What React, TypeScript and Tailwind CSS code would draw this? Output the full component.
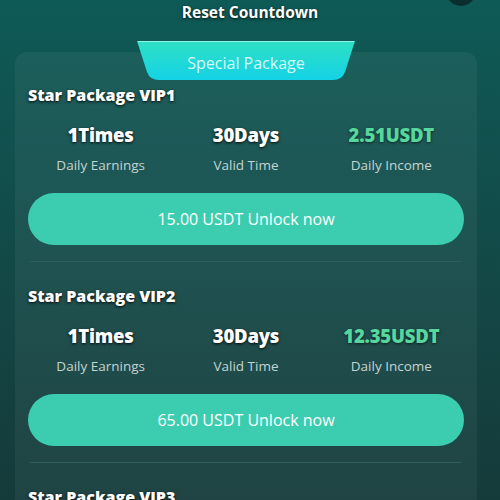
import React from "react";

const packages = [
  { name: "Star Package VIP1", times: "1Times", days: "30Days", income: "2.51USDT", price: "15.00" },
  { name: "Star Package VIP2", times: "1Times", days: "30Days", income: "12.35USDT", price: "65.00" },
  { name: "Star Package VIP3", times: "1Times", days: "30Days", income: "25.00USDT", price: "128.00" },
];

function Tab() {
  return (
    <div className="absolute left-[122px] -top-[11px] w-[218px] h-[39px]">
      <svg width="218" height="39" viewBox="0 0 218 39" className="absolute inset-0">
        <defs>
          <linearGradient id="tg" x1="0" y1="0" x2="0" y2="1">
            <stop offset="0" stopColor="#2fe0c4" />
            <stop offset="1" stopColor="#14d2e6" />
          </linearGradient>
        </defs>
        <path d="M0 0 H218 L208 31 Q205 39 196 39 H22 Q13 39 10 31 Z" fill="url(#tg)" />
        <path d="M1 0.5 H217" stroke="#8ff5e6" strokeWidth="1" />
      </svg>
      <div className="relative h-full flex items-center justify-center text-[16px] leading-[20px] text-[#d8fbf6] pt-[4px]">
        Special Package
      </div>
    </div>
  );
}

const shadow = "[text-shadow:0_1px_3px_rgba(0,0,0,0.9)]";

function Section({ p }: { p: (typeof packages)[number] }) {
  return (
    <div>
      <div className="text-[16px] leading-[22px] font-extrabold text-white [text-shadow:0_1px_3px_rgba(0,0,0,0.9)]">
        {p.name}
      </div>
      <div className="grid grid-cols-3 mt-[18px] text-center">
        <div>
          <div className="text-[18.5px] leading-[22px] font-extrabold tracking-[-0.2px] text-white [text-shadow:0_1px_3px_rgba(0,0,0,0.9)]">{p.times}</div>
          <div className="mt-[11px] text-[13.5px] leading-[16px] text-[#c3d3d1]">Daily Earnings</div>
        </div>
        <div>
          <div className="text-[18.5px] leading-[22px] font-extrabold tracking-[-0.2px] text-white [text-shadow:0_1px_3px_rgba(0,0,0,0.9)]">{p.days}</div>
          <div className="mt-[11px] text-[13.5px] leading-[16px] text-[#c3d3d1]">Valid Time</div>
        </div>
        <div>
          <div className="text-[18.5px] leading-[22px] font-extrabold tracking-[-0.2px] text-[#57d69e] [text-shadow:0_1px_3px_rgba(0,0,0,0.6)]">{p.income}</div>
          <div className="mt-[11px] text-[13.5px] leading-[16px] text-[#c3d3d1]">Daily Income</div>
        </div>
      </div>
      <div className="mt-[20px] h-[52px] rounded-full bg-[#3ccdb0] flex items-center justify-center text-[16px] text-white">
        {p.price} USDT Unlock now
      </div>
      <div className="mt-[16px] mx-[2px] h-px bg-[#2e5e5c]" />
      <div className="h-[23px]" />
    </div>
  );
}

export default function App() {
  void shadow;
  return (
    <div className="relative w-[500px] h-[500px] overflow-hidden bg-gradient-to-b from-[#0e5a56] via-[#124a48] to-[#153a3a] font-['Open_Sans',sans-serif]">
      <div className="absolute right-[24px] -top-[24px] w-[30px] h-[30px] rounded-full bg-[#0a2e2e]" />
      <div className="pt-[2px] text-center text-[15.5px] leading-[20px] font-bold text-white [text-shadow:0_1px_3px_rgba(0,0,0,0.8)]">
        Reset Countdown
      </div>
      <div className="relative ml-[15px] w-[462px] mt-[30px] rounded-t-[12px] bg-[#ffffff0d] px-[13px] pt-[32px]">
        <Tab />
        {packages.map((p) => (
          <Section key={p.name} p={p} />
        ))}
      </div>
    </div>
  );
}
